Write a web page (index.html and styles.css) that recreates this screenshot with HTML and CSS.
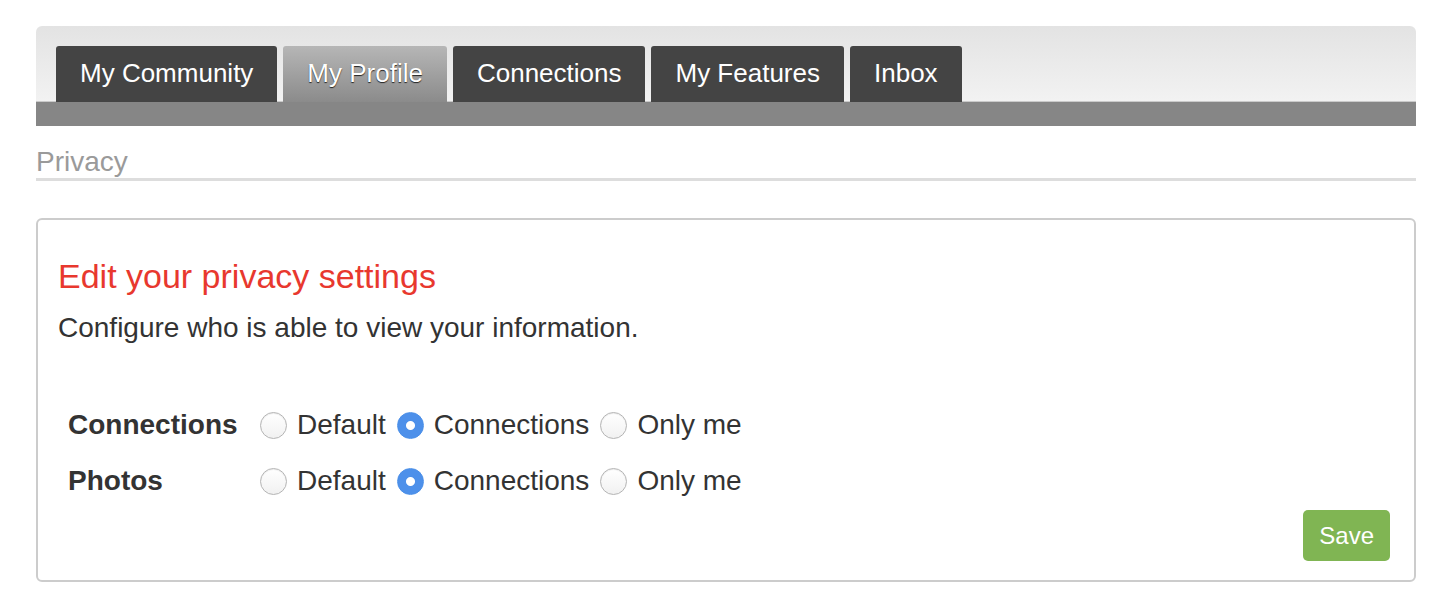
FILE: index.html
```html
<!DOCTYPE html>
<html lang="en">
<head>
    <meta charset="UTF-8">
    <meta name="viewport" content="width=device-width, initial-scale=1.0">
    <title>Privacy</title>
    <link rel="stylesheet" href="styles.css">
</head>
<body>
    <div class="page">
        <div class="header">
            <ul class="tabs">
                <li class="tab">My Community</li>
                <li class="tab active">My Profile</li>
                <li class="tab">Connections</li>
                <li class="tab">My Features</li>
                <li class="tab">Inbox</li>
            </ul>
        </div>
        <div class="subbar"></div>

        <h1 class="section-title">Privacy</h1>

        <form class="card" id="privacyForm">
            <h2>Edit your privacy settings</h2>
            <p class="intro">Configure who is able to view your information.</p>

            <div class="settings">
                <div class="row">
                    <span class="row-label">Connections</span>
                    <label class="option"><input type="radio" name="connections" value="default"> Default</label>
                    <label class="option"><input type="radio" name="connections" value="connections" checked> Connections</label>
                    <label class="option"><input type="radio" name="connections" value="me"> Only me</label>
                </div>
                <div class="row">
                    <span class="row-label">Photos</span>
                    <label class="option"><input type="radio" name="photos" value="default"> Default</label>
                    <label class="option"><input type="radio" name="photos" value="connections" checked> Connections</label>
                    <label class="option"><input type="radio" name="photos" value="me"> Only me</label>
                </div>
            </div>

            <div class="actions">
                <button type="button" class="save-button">Save</button>
            </div>
        </form>
    </div>
</body>
</html>
```

FILE: styles.css
```css
body {
    font-family: "Liberation Sans", Arial, sans-serif;
    background-color: #fff;
    color: #333;
    margin: 0;
    padding: 0;
}

.page {
    margin: 26px 34px 0 36px;
}

/* top navigation */
.header {
    background: linear-gradient(#e3e3e3, #f2f2f2);
    border-radius: 6px 6px 0 0;
    border-bottom: 1px solid #cacaca;
    padding: 20px 20px 0;
}

.tabs {
    list-style-type: none;
    margin: 0 0 -1px;
    padding: 0;
    display: flex;
    gap: 6px;
}

.tab {
    background-color: #444;
    color: #fff;
    font-size: 26px;
    height: 56px;
    line-height: 55px;
    padding: 0 24px;
    border-radius: 3px 3px 0 0;
}

.tab.active {
    background: linear-gradient(#b6b6b6, #8b8b8b);
    text-shadow: 0 1px 1px #222;
}

.subbar {
    height: 24px;
    background-color: #868686;
}

.section-title {
    font-size: 28px;
    font-weight: normal;
    color: #9a9a9a;
    line-height: 32px;
    margin: 20px 0 0;
    padding-bottom: 0;
    border-bottom: 3px solid #ddd;
}

/* privacy card */
.card {
    margin-top: 37px;
    border: 2px solid #ccc;
    border-radius: 6px;
    padding: 37px 24px 19px 20px;
}

.card h2 {
    font-size: 34px;
    font-weight: normal;
    color: #e8382e;
    line-height: 39px;
    margin: 0;
}

.intro {
    font-size: 28px;
    line-height: 32px;
    margin: 16px 0 0;
}

.settings {
    margin-top: 53px;
    padding-left: 10px;
}

.row {
    display: flex;
    align-items: center;
    height: 56px;
    font-size: 28px;
}

.row-label {
    width: 192px;
    font-weight: bold;
}

.option {
    display: flex;
    align-items: center;
    margin-right: 11px;
}

.option input {
    appearance: none;
    -webkit-appearance: none;
    width: 27px;
    height: 27px;
    margin: 0 10px 0 0;
    border-radius: 50%;
    border: 1px solid #b4b4b4;
    background: linear-gradient(#fff, #f1f1f1);
    box-shadow: inset 0 1px 1px rgba(0, 0, 0, 0.08);
}

.option input:checked {
    border-color: #4a8fe8;
    background: radial-gradient(circle, #fff 0, #fff 4px, #4d90ea 5px);
    box-shadow: none;
}

.actions {
    display: flex;
    justify-content: flex-end;
    margin-top: 1px;
}

.save-button {
    font-family: "Liberation Sans", Arial, sans-serif;
    font-size: 24px;
    height: 51px;
    padding: 0 16px;
    background-color: #80b553;
    color: #fff;
    border: none;
    border-radius: 5px;
    cursor: pointer;
}

.save-button:hover {
    background-color: #72a547;
}
```
